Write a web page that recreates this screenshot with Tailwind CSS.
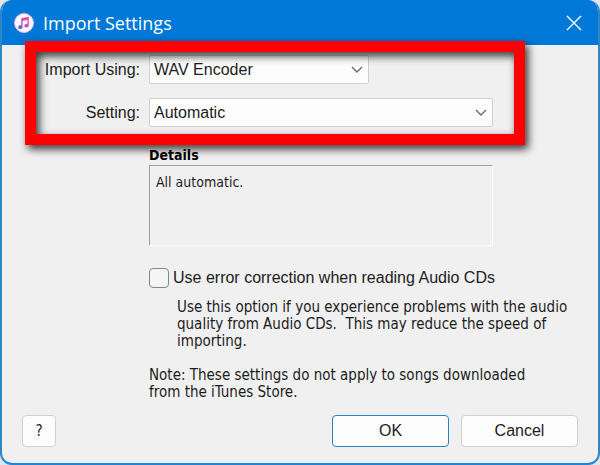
<!DOCTYPE html>
<html lang="en">
<head>
    <meta charset="UTF-8">
    <meta name="viewport" content="width=device-width, initial-scale=1.0">
    <title>Import Settings</title>
    <script src="https://cdn.jsdelivr.net/npm/@tailwindcss/browser@4"></script>
</head>
<body class="min-h-screen bg-[#dfe6ea] font-['Liberation_Sans',Arial,sans-serif] text-base text-[#1c1c1c]">
    <div class="flex min-h-screen flex-col overflow-hidden rounded-xl border-x-2 border-b-2 border-[#2f86c4] border-b-[#1a86dc] bg-[#f0f0f0]">
        <!-- Title bar -->
        <header class="-mx-0.5 flex h-[45px] items-center bg-[#0078d7] pr-[18px] pl-[14px] text-white">
            <svg class="h-5 w-5" viewBox="0 0 20 20" aria-hidden="true">
                <defs>
                    <linearGradient id="note" x1="1" y1="0" x2="0.2" y2="1">
                        <stop offset="0" stop-color="#fb4b6c"></stop>
                        <stop offset="0.5" stop-color="#d94fb8"></stop>
                        <stop offset="1" stop-color="#4f5df0"></stop>
                    </linearGradient>
                </defs>
                <circle cx="10" cy="10" r="9.5" fill="#fdfaff" stroke="#e3b6ec"></circle>
                <path fill="url(#note)" d="M7.2 5.2 14.8 3.7v8.8a2.2 1.8 0 1 1-1.4-1.6V6.9L8.6 7.9v6.2a2.2 1.8 0 1 1-1.4-1.6z"></path>
            </svg>
            <h1 class="ml-[9px] flex-1 font-['Open_Sans',sans-serif] text-[18px] leading-6">Import Settings</h1>
            <button type="button" aria-label="Close" class="flex h-6 w-4 items-center justify-center">
                <svg class="h-4 w-4" viewBox="0 0 16 16" fill="none" stroke="currentColor" stroke-width="1.4">
                    <path d="M1 1l14 14M15 1L1 15"></path>
                </svg>
            </button>
        </header>

        <form class="flex flex-1 flex-col">
            <div class="flex-1 pr-[105px] pl-5">
                <!-- Encoder options -->
                <div class="relative grid grid-cols-[118px_1fr] items-center gap-x-[9px] gap-y-[14px] pt-[10px]">
                    <label for="encoder" class="text-right">Import Using:</label>
                    <div class="relative w-[220px]">
                        <select id="encoder" class="h-[29px] w-full appearance-none rounded-xs border border-[#cfcfcf] bg-[#fdfdfd] pr-8 pl-1">
                            <option>WAV Encoder</option>
                        </select>
                        <svg class="pointer-events-none absolute top-2 right-[6px] h-3 w-3" viewBox="0 0 12 12" fill="none" stroke="#6b6b6b" stroke-width="1.4">
                            <path d="M1 4l5 5 5-5"></path>
                        </svg>
                    </div>

                    <label for="setting" class="text-right">Setting:</label>
                    <div class="relative">
                        <select id="setting" class="h-[29px] w-full appearance-none rounded-xs border border-[#cfcfcf] bg-[#fdfdfd] pr-8 pl-1">
                            <option>Automatic</option>
                        </select>
                        <svg class="pointer-events-none absolute top-2 right-[6px] h-3 w-3" viewBox="0 0 12 12" fill="none" stroke="#6b6b6b" stroke-width="1.4">
                            <path d="M1 4l5 5 5-5"></path>
                        </svg>
                    </div>

                    <!-- Highlight frame -->
                    <div class="pointer-events-none absolute -top-1 -right-8 -bottom-[18px] left-[3px] border-[11px] border-[#fe0000] drop-shadow-[3px_4px_4px_rgb(0_0_0/0.8)]"></div>
                </div>

                <div class="pt-5 pl-[127px] font-['DejaVu_Sans_Condensed','DejaVu_Sans',Tahoma,sans-serif] text-[15px] leading-[17px]">
                    <h2 class="pb-px text-[14px] font-bold text-black">Details</h2>
                    <div class="h-[81px] border border-t-[#a0a0a0] border-r-white border-b-white border-l-[#a0a0a0] px-[6px] py-2 text-[14px]">All automatic.</div>

                    <div class="mt-5 flex items-center gap-1">
                        <input id="correction" type="checkbox" class="h-5 w-5 shrink-0 appearance-none rounded-sm border border-[#858585] bg-[#f5f5f5]">
                        <label for="correction" class="font-['Liberation_Sans',Arial,sans-serif] text-base whitespace-nowrap">Use error correction when reading Audio CDs</label>
                    </div>
                    <p class="-mr-20 pt-[9px] pl-7">Use this option if you experience problems with the audio quality from Audio CDs.&nbsp; This may reduce the speed of importing.</p>
                    <p class="-mr-10 pt-[17px]">Note: These settings do not apply to songs downloaded from the iTunes Store.</p>
                </div>
            </div>

            <!-- Buttons -->
            <div class="flex gap-3 pt-3 pr-5 pb-4 pl-5">
                <button type="button" aria-label="Help" class="mr-auto h-8 w-[34px] rounded-sm border border-[#d0d0d0] bg-[#fdfdfd] font-['DejaVu_Sans_Condensed','DejaVu_Sans',Tahoma,sans-serif] text-[15px]">?</button>
                <button type="submit" class="h-8 w-[117px] rounded-sm border border-[#2a83c0] bg-[#fdfdfd]">OK</button>
                <button type="button" class="h-8 w-[117px] rounded-sm border border-[#d0d0d0] bg-[#fdfdfd]">Cancel</button>
            </div>
        </form>
    </div>
</body>
</html>
